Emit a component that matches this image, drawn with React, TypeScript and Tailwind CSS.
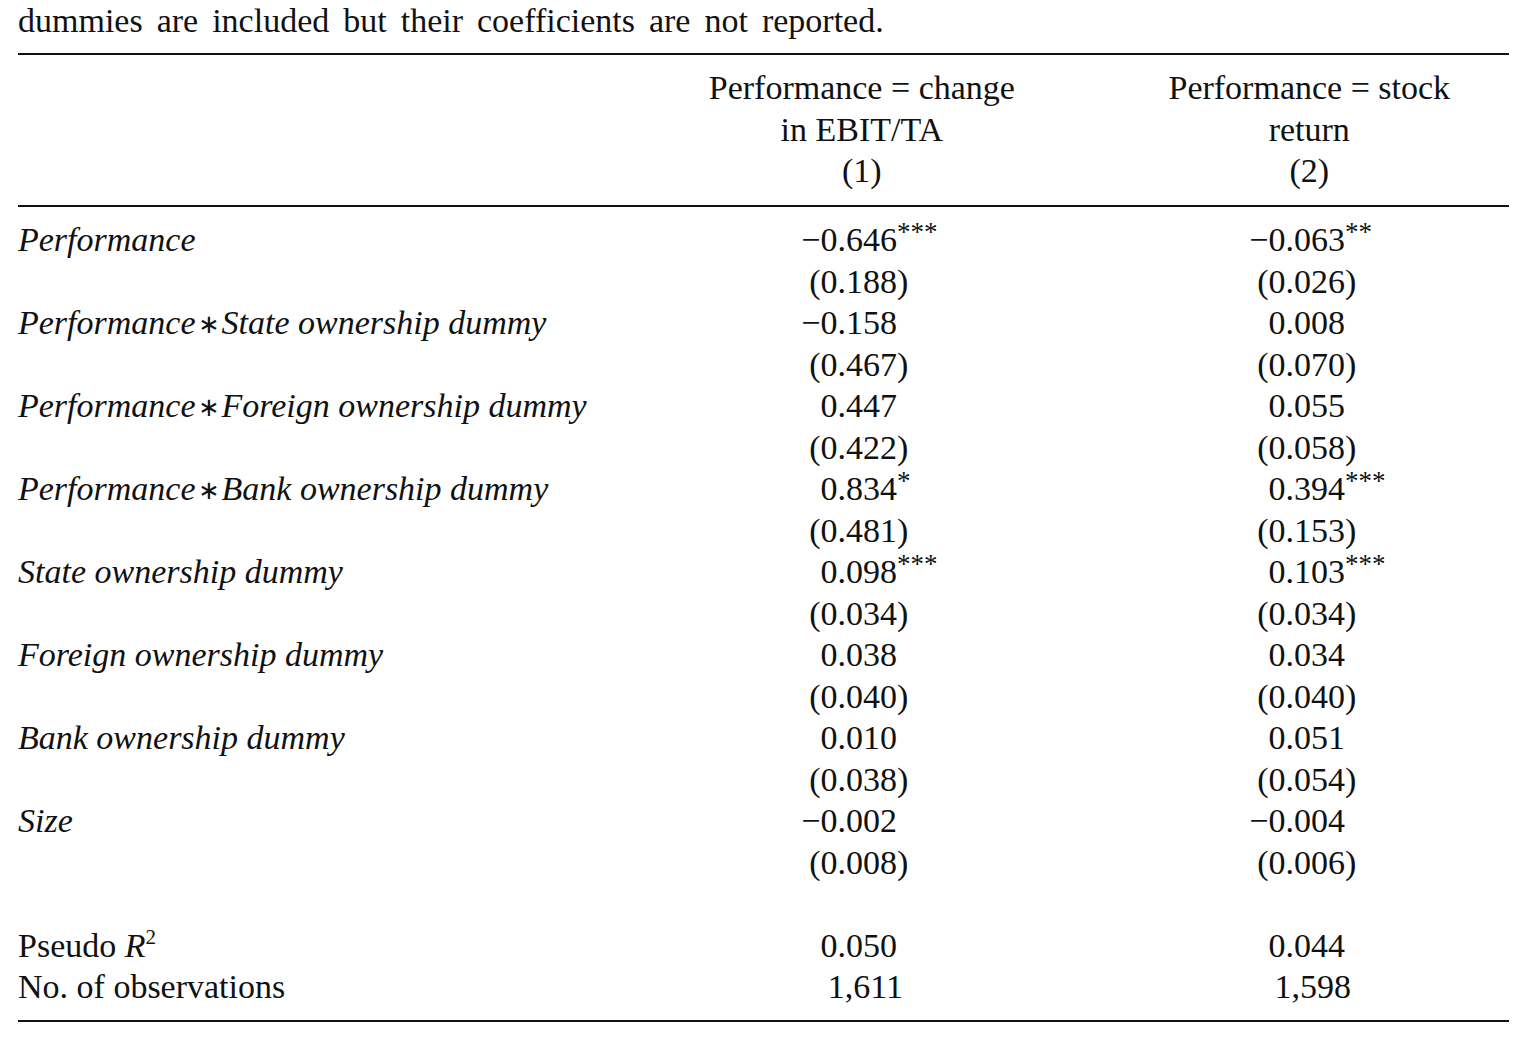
import React from "react";

type Cell = { v: string; sup?: string; se?: boolean; wide?: boolean };
type Row = { label?: React.ReactNode; a?: Cell; b?: Cell };

const Star = () => <span className="not-italic px-[2px] text-[26px] align-[1px]">∗</span>;

const rows: Row[] = [
  { label: <i>Performance</i>, a: { v: "−0.646", sup: "***" }, b: { v: "−0.063", sup: "**" } },
  { a: { v: "0.188", se: true }, b: { v: "0.026", se: true } },
  {
    label: (
      <i>
        Performance<Star />State ownership dummy
      </i>
    ),
    a: { v: "−0.158" },
    b: { v: "0.008" },
  },
  { a: { v: "0.467", se: true }, b: { v: "0.070", se: true } },
  {
    label: (
      <i>
        Performance<Star />Foreign ownership dummy
      </i>
    ),
    a: { v: "0.447" },
    b: { v: "0.055" },
  },
  { a: { v: "0.422", se: true }, b: { v: "0.058", se: true } },
  {
    label: (
      <i>
        Performance<Star />Bank ownership dummy
      </i>
    ),
    a: { v: "0.834", sup: "*" },
    b: { v: "0.394", sup: "***" },
  },
  { a: { v: "0.481", se: true }, b: { v: "0.153", se: true } },
  { label: <i>State ownership dummy</i>, a: { v: "0.098", sup: "***" }, b: { v: "0.103", sup: "***" } },
  { a: { v: "0.034", se: true }, b: { v: "0.034", se: true } },
  { label: <i>Foreign ownership dummy</i>, a: { v: "0.038" }, b: { v: "0.034" } },
  { a: { v: "0.040", se: true }, b: { v: "0.040", se: true } },
  { label: <i>Bank ownership dummy</i>, a: { v: "0.010" }, b: { v: "0.051" } },
  { a: { v: "0.038", se: true }, b: { v: "0.054", se: true } },
  { label: <i>Size</i>, a: { v: "−0.002" }, b: { v: "−0.004" } },
  { a: { v: "0.008", se: true }, b: { v: "0.006", se: true } },
  {},
  {
    label: (
      <>
        Pseudo <i>R</i>
        <span className="text-[21px] align-[13px] leading-none">2</span>
      </>
    ),
    a: { v: "0.050" },
    b: { v: "0.044" },
  },
  { label: "No. of observations", a: { v: "1,611", wide: true }, b: { v: "1,598", wide: true } },
];

// number part is right aligned so the decimals line up, parens/stars hang off the right
const Value = ({ c, first }: { c?: Cell; first?: boolean }) => (
  <div className={first ? "flex w-[448px]" : "flex"}>
    {c && (
      <>
        <span className={c.wide ? "w-[206px] text-right" : "w-[200px] text-right"}>
          {c.se ? "(" + c.v : c.v}
        </span>
        {c.se && <span>)</span>}
        {c.sup && <span className="text-[27px] align-[4px] leading-none">{c.sup}</span>}
      </>
    )}
  </div>
);

export default function App() {
  return (
    <div className="min-h-screen bg-white text-[#111] font-['Liberation_Serif','Times_New_Roman',serif] text-[34px] leading-[41.5px]">
      <div className="mx-[18px]">
        <p className="[word-spacing:5.5px]">dummies are included but their coefficients are not reported.</p>

        <div className="mt-[11.5px] border-t-[2px] border-[#111]" />

        {/* column heads */}
        <div className="flex pt-[12px] pb-[13.5px]">
          <div className="w-[645px]" />
          <div className="w-[400px] text-center">
            <div>Performance = change</div>
            <div>in EBIT/TA</div>
            <div>(1)</div>
          </div>
          <div className="ml-[48px] w-[400px] text-center">
            <div>Performance = stock</div>
            <div>return</div>
            <div>(2)</div>
          </div>
        </div>

        <div className="border-t-[2px] border-[#111]" />

        <div className="pt-[12px]">
          {rows.map((r, i) => (
            <div key={i} className="flex h-[41.5px]">
              <div className="w-[679px] whitespace-nowrap">{r.label}</div>
              <Value c={r.a} first />
              <Value c={r.b} />
            </div>
          ))}
        </div>

        <div className="mt-[12.5px] border-t-[2px] border-[#111]" />
      </div>
    </div>
  );
}
